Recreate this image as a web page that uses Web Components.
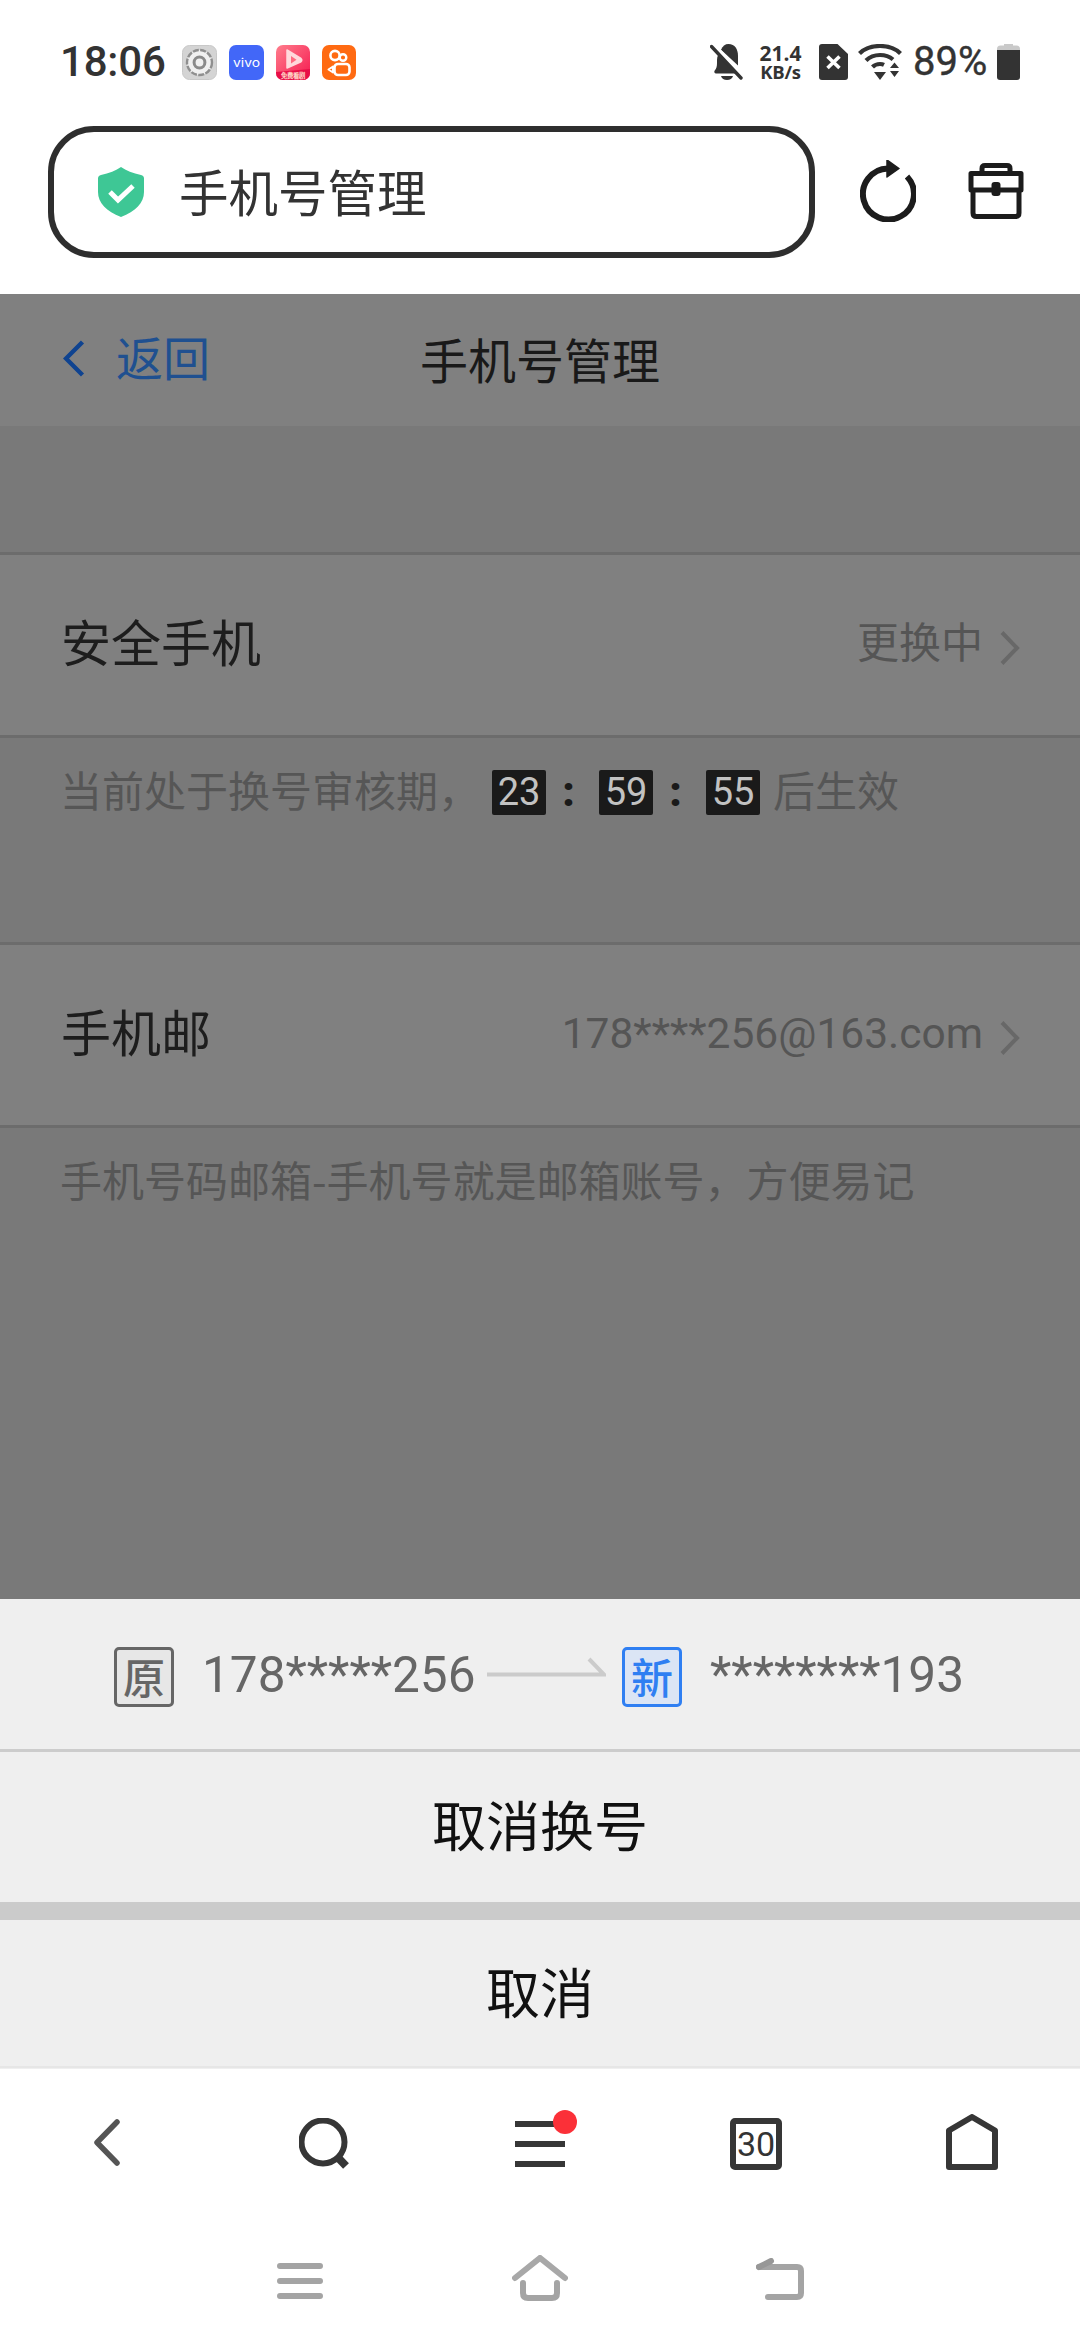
<!DOCTYPE html>
<html lang="zh-CN"><head><meta charset="utf-8"><title>手机号管理</title>
<style>
html,body{margin:0;padding:0;background:#fff}
body{width:1080px;height:2344px;overflow:hidden;font-family:"Noto Sans CJK SC","Noto Sans",sans-serif;display:flex;flex-direction:column}
</style></head><body>
<status-bar></status-bar>
<url-bar>手机号管理</url-bar>
<dim-page>
  <page-head>手机号管理</page-head>
  <list-row class="first"></list-row>
  <info-hint>当前处于换号审核期，<count-box style="margin-left:12px">23</count-box><count-sep></count-sep><count-box>59</count-box><count-sep></count-sep><count-box>55</count-box><span style="margin-left:13px">后生效</span></info-hint>
  <list-row name="手机邮" value="178****256@163.com"></list-row>
  <info-hint>手机号码邮箱-手机号就是邮箱账号，方便易记</info-hint>
</dim-page>
<action-sheet>
  <swap-row></swap-row>
  <sheet-button>取消换号</sheet-button>
  <sheet-button slot="cancel">取消</sheet-button>
</action-sheet>
<browser-nav></browser-nav>
<gesture-nav></gesture-nav>
<script>
function def(name,css,html,init){
  customElements.define(name,class extends HTMLElement{
    constructor(){super();const r=this.attachShadow({mode:'open'});r.innerHTML='<style>'+css+'</style>'+html;}
    connectedCallback(){if(init)init(this,this.shadowRoot);}
  });
}
const sans='"Noto Sans CJK SC","Noto Sans",sans-serif';
def('status-bar',`
:host{display:flex;align-items:center;height:124px;flex:none;padding:0 60px 0 60px;color:#333;font-family:Roboto,sans-serif}
.t{font-size:42px;font-weight:500;width:105px;line-height:48px;margin-right:17px;white-space:nowrap;letter-spacing:-.2px}
.a{display:flex;gap:12px}
svg{display:block;flex:none}
.r{margin-left:auto;display:flex;align-items:center}
.s{width:43px;margin:0 17px 0 16px;font:700 21px/15px "Open Sans",sans-serif;text-align:center;white-space:nowrap}
.s div+div{font-size:18.500px;font-weight:700;margin-top:3px;line-height:15px;letter-spacing:-.3px}
.p{font-size:40px;width:73px;margin:0 11px;line-height:46px;white-space:nowrap;-webkit-text-stroke:.4px #333}
`,`<div class="t">18:06</div>
<div class="a">
<svg width="35" height="35" viewBox="0 0 35 35"><rect x=".5" y=".5" width="34" height="34" rx="7" fill="#d4d4d4" stroke="#c8c8c8"/><circle cx="17.5" cy="17.5" r="12.5" fill="#f0f0f0" stroke="#8f8f8f" stroke-width="2.4" stroke-dasharray="6 1.4"/><circle cx="17.5" cy="17.5" r="5.4" fill="none" stroke="#8a8a8a" stroke-width="3"/></svg>
<svg width="35" height="35" viewBox="0 0 35 35"><rect width="35" height="35" rx="7" fill="#4267f8"/><text x="17.5" y="21.500" text-anchor="middle" font-family="Inter,sans-serif" font-size="11" textLength="27" lengthAdjust="spacingAndGlyphs" fill="#fff">vivo</text></svg>
<svg width="34" height="35" viewBox="0 0 34 35"><defs><linearGradient id="g" x1="0" y1="0" x2="1" y2="1"><stop offset="0" stop-color="#ff7d8c"/><stop offset="1" stop-color="#f5184f"/></linearGradient></defs><rect width="34" height="35" rx="7" fill="url(#g)"/><path d="M11 5 25 13.500a2 2 0 0 1 0 3.200L11 23z" fill="#ffd9dc" stroke="#ffd9dc" stroke-width="1.5" stroke-linejoin="round"/><path d="M15 11 20.500 14.800 15 18.500z" fill="#ff6a80"/><path d="M0 27 34 24v4a7 7 0 0 1-7 7H7a7 7 0 0 1-7-7z" fill="#e80f47"/><text x="17" y="33" text-anchor="middle" font-family="${sans}" font-size="6.4" font-weight="700" fill="#ffd9c9">免费看剧</text></svg>
<svg width="34" height="35" viewBox="0 0 34 35"><rect width="34" height="35" rx="7" fill="#ff6a12"/><circle cx="13" cy="10.500" r="4.600" fill="none" stroke="#fff" stroke-width="2.600"/><circle cx="21" cy="12.500" r="3.300" fill="none" stroke="#fff" stroke-width="2.400"/><rect x="12.500" y="19" width="15" height="11" rx="3.500" fill="none" stroke="#fff" stroke-width="2.600"/><path d="M11 21.500 6.500 24.500 11 27.500z" fill="none" stroke="#fff" stroke-width="2" stroke-linejoin="round"/></svg>
</div>
<div class="r">
<svg width="33" height="36" viewBox="0 0 33 36"><path d="M6 29.500c-1.400 0-2.300-1.800-1.300-3C6.500 24.500 7 22.500 7 19v-3c0-2 .4-3.800 1.200-5.300L27 29.500z" fill="#333"/><path d="M11 5.800C12.800 2 15 0 18.500 0 25 0 28 5.500 28 12v9.500z" fill="#333"/><path d="M11 32h12c-.7 2.500-3 4-6 4s-5.300-1.500-6-4z" fill="#333"/><path d="M1.500 2.500 31 34" stroke="#333" stroke-width="3.400" stroke-linecap="round"/><path d="M5.500 1.500 33 31" stroke="#fff" stroke-width="2"/></svg>
<div class="s"><div>21.4</div><div>KB/s</div></div>
<svg width="29" height="36" viewBox="0 0 29 36"><path d="M3 0h15.500L29 10v23a3 3 0 0 1-3 3H3a3 3 0 0 1-3-3V3a3 3 0 0 1 3-3z" fill="#333"/><path d="M8.500 12.500 20.500 24M20.500 12.500 8.500 24" stroke="#fff" stroke-width="3.600"/></svg>
<svg width="44" height="36" viewBox="0 0 44 36" style="margin-left:10px"><g fill="none" stroke="#333" stroke-width="4.200"><path d="M1.500 9.500C6.500 4.500 13.500 2 22 2s15.500 2.500 20.500 7.500"/><path d="M8 16.500c3.500-3.500 8-5.500 14-5.500 5.500 0 9.500 1.500 13 4.500"/><path d="M14.500 23c2-2 4.500-3 7.500-3 1.500 0 3 .3 4 .8"/></g><path d="M16 28h12l-6 8zM32 24l4.500-5.500L41 24zM32 27h9l-4.500 6z" fill="#333"/></svg>
<div class="p">89%</div>
<svg width="23" height="36" viewBox="0 0 23 36"><path d="M7 0h9v1.500h3.500a3.500 3.500 0 0 1 3.500 3.500v2H0V5a3.500 3.500 0 0 1 3.500-3.500H7z" fill="#c9c9c9"/><path d="M0 6h23v27a3 3 0 0 1-3 3H3a3 3 0 0 1-3-3z" fill="#333"/></svg>
</div>`);

def('url-bar',`
:host{display:flex;align-items:flex-start;height:170px;flex:none;padding:2px 0 0 48px;box-sizing:border-box}
.b{width:767px;height:132px;box-sizing:border-box;border:6px solid #2e2e2e;border-radius:46px;display:flex;align-items:center;padding:0 0 0 44px}
.b span{margin:-3px 0 0 35px;font-size:49.500px;line-height:60px;color:#333}
svg{display:block;flex:none}
.i1{margin:34px 0 0 45px}.i2{margin:37px 0 0 52px}
`,`<div class="b"><svg width="46" height="50" viewBox="0 0 46 50"><path d="M23 0c5 3.500 12 6.500 20 8 2 .4 3 1.500 3 3.500V25c0 11-8.500 19.500-23 25C8.500 44.500 0 36 0 25V11.500C0 9.500 1 8.400 3 8c8-1.500 15-4.500 20-8z" fill="#3ec795"/><path d="M12 25l8 8 15-14" fill="none" stroke="#fff" stroke-width="5"/></svg><span><slot></slot></span></div>
<svg class="i1" width="56" height="62" viewBox="0 0 56 62"><path d="M47 16.500A25.500 25.500 0 1 1 28 8.500" fill="none" stroke="#1c1c1c" stroke-width="6"/><path d="M27 0 39 8.500 27 17z" fill="#1c1c1c" stroke="#1c1c1c" stroke-width="1.500" stroke-linejoin="round"/></svg>
<svg class="i2" width="56" height="56" viewBox="0 0 56 56"><g fill="none" stroke="#1c1c1c" stroke-width="5" stroke-linejoin="round"><path d="M14 10V5.500q0-3 3-3h22q3 0 3 3V10"/><path d="M3 10.500h50V27H3z"/><path d="M5 27v23q0 3.500 3.500 3.500h39q3.500 0 3.500-3.500V27"/></g><rect x="23.500" y="19" width="9" height="14" rx="3" fill="#1c1c1c"/></svg>`);

def('dim-page',`:host{display:block;height:1305px;flex:none;background:#797979;overflow:hidden}`,`<slot></slot>`);

def('page-head',`
:host{display:flex;position:relative;align-items:center;justify-content:center;height:132px;background:#808080;color:#191919;font-size:48px}
.t{line-height:60px;margin-top:-5px}
a{position:absolute;left:63px;top:45px;display:flex;align-items:center;color:#1f5090;font-size:47px;line-height:44px}
a span{margin:-5px 0 0 31px}
svg{display:block}
`,`<a><svg width="22" height="37" viewBox="0 0 22 37"><path d="M19.500 2 3 18.500 19.500 35" fill="none" stroke="#0f4390" stroke-width="4.400"/></svg><span>返回</span></a><div class="t"><slot></slot></div>`);

def('list-row',`
:host{display:flex;align-items:center;height:180px;background:#808080;border-top:3px solid #6c6c6c;border-bottom:3px solid #6c6c6c;padding:0 60px 0 61px}
:host(.first){margin-top:126px}
.n{font-size:50px;line-height:60px;color:#1d1d1d;margin-top:-10px}
.v{margin-left:auto;color:#555;font-size:42px;line-height:50px;margin-top:-2px;font-family:Roboto,${sans}}
:host([value]) .v{font-size:42.500px}
svg{display:block;margin-left:16px;margin-top:6px}
`,`<div class="n"></div><div class="v"></div><svg width="21" height="34" viewBox="0 0 21 34"><path d="M3 1.500 18 17 3 32.500" fill="none" stroke="#686868" stroke-width="4"/></svg>`,
(el,r)=>{r.querySelector('.n').textContent=el.getAttribute('name')||'安全手机';r.querySelector('.v').textContent=el.getAttribute('value')||'更换中';});

def('info-hint',`
:host{display:flex;align-items:center;height:45px;padding:28px 0 131px 60px;color:#565656;font-size:42px;line-height:45px;white-space:nowrap}
:host(:last-child){padding-bottom:0}
`,`<slot></slot>`);

def('count-box',`
:host{display:flex;align-items:center;justify-content:center;width:54px;height:45px;margin-top:8px;background:#1a1a1a;border-radius:2px;color:#c2c2c2;font:38px/45px Roboto,sans-serif}
`,`<slot></slot>`);
def('count-sep',`
:host{display:flex;justify-content:center;box-sizing:border-box;width:53px;padding-right:8px;margin-top:6px;color:#1a1a1a;font:900 42px/42px Roboto,sans-serif}
`,`<span>:</span>`);

def('action-sheet',`
:host{display:block;height:470px;flex:none;background:#efefef}
.g{height:18px;background:#cbcbcb}
.c{height:148px;display:block}
.f{height:2px;background:#e6e6e6;margin-top:-2px;position:relative}
`,`<slot></slot><div class="g"></div><div class="c"><slot name="cancel"></slot></div><div class="f"></div>`);

def('swap-row',`
:host{display:flex;align-items:center;height:144px;padding-top:6px;border-bottom:3px solid #ccc;padding-left:114px;color:#666;font:49.500px/60px Roboto,sans-serif;white-space:nowrap}
.tag{width:60px;height:60px;box-sizing:border-box;border:3px solid #666;border-radius:5px;background:#e7e7e7;display:flex;align-items:center;justify-content:center;font:500 42px/50px ${sans};color:#666}
.tag span{margin-top:-3px}
.new{border-color:#2f7ff2;background:#dbe5f5;color:#2f7ff2}
.x{margin-top:-4px}
svg{display:block;flex:none;margin:0 16px 17px 13px}
`,`<div class="tag"><span>原</span></div><div class="x" style="margin-left:28px;width:272px">178*****256</div><svg width="119" height="24" viewBox="0 0 119 24"><path d="M0 17.500H117L102 2" fill="none" stroke="#cbcbcb" stroke-width="4"/></svg><div class="tag new"><span>新</span></div><div class="x" style="margin-left:28px">********193</div>`);

def('sheet-button',`
:host{display:flex;align-items:center;justify-content:center;height:150px;font-size:54px;line-height:60px;color:#111;padding-bottom:0}
span{margin-top:-6px}
:host([slot=cancel]){height:148px}
`,`<span><slot></slot></span>`);

def('browser-nav',`
:host{display:grid;grid-template-columns:repeat(5,216px);height:150px;flex:none;background:#fff}
div{display:flex;align-items:center;justify-content:center;position:relative}
svg{display:block}
i{position:absolute;width:24px;height:24px;border-radius:50%;background:#fb3038;left:121px;top:41px}
.n{font:34px/36px Roboto,"Noto Sans",sans-serif;color:#333;position:absolute}
`,`<div style="padding:0 4px 3px 0"><svg width="27" height="47" viewBox="0 0 27 47"><path d="M24 3 4 23.500 24 44" fill="none" stroke="#555" stroke-width="5.500" stroke-linejoin="round" stroke-linecap="round"/></svg></div>
<div><svg width="51" height="52" viewBox="0 0 51 52"><circle cx="24" cy="24" r="21.500" fill="none" stroke="#363636" stroke-width="6"/><path d="M37.500 38 47 48" stroke="#363636" stroke-width="8" stroke-linejoin="round"/></svg></div>
<div><svg width="50" height="46" viewBox="0 0 50 46"><path d="M0 3h50M0 23h50M0 43h50" stroke="#363636" stroke-width="6"/></svg><i></i></div>
<div><svg width="52" height="52" viewBox="0 0 52 52"><rect x="3" y="3" width="46" height="46" rx="2" fill="none" stroke="#363636" stroke-width="6"/></svg><span class="n">30</span></div>
<div><svg width="52" height="56" viewBox="0 0 52 56" style="margin-top:-4px"><path d="M3 16.500 26 3l23 13.500V53H3z" fill="none" stroke="#363636" stroke-width="6" stroke-linejoin="round"/></svg></div>`);

def('gesture-nav',`
:host{display:flex;justify-content:center;height:125px;flex:none;background:#fff;padding-left:0}
div{width:240px;display:flex;justify-content:center;padding-top:36px;box-sizing:border-box}
svg{display:block}
`,`<div style="padding-top:44px"><svg width="46" height="36" viewBox="0 0 46 36"><path d="M3 3h40M3 18h40M3 33h40" stroke="#a4a4a4" stroke-width="6" stroke-linecap="round"/></svg></div>
<div><svg width="56" height="46" viewBox="0 0 56 46"><path d="M3 23 28 3l25 20" fill="none" stroke="#a8a8a8" stroke-width="6" stroke-linecap="round"/><path d="M11 28v10q0 5 5 5h24q5 0 5-5V28" fill="none" stroke="#a4a4a4" stroke-width="6" stroke-linecap="round"/></svg></div>
<div style="padding-top:39px"><svg width="48" height="42" viewBox="0 0 48 42"><path d="M3 9h38q4 0 4 4v22q0 4-4 4H12" fill="none" stroke="#a4a4a4" stroke-width="6" stroke-linecap="round"/><path d="M3 9 15 3" fill="none" stroke="#979797" stroke-width="6" stroke-linecap="round"/></svg></div>`);
</script>
</body></html>
